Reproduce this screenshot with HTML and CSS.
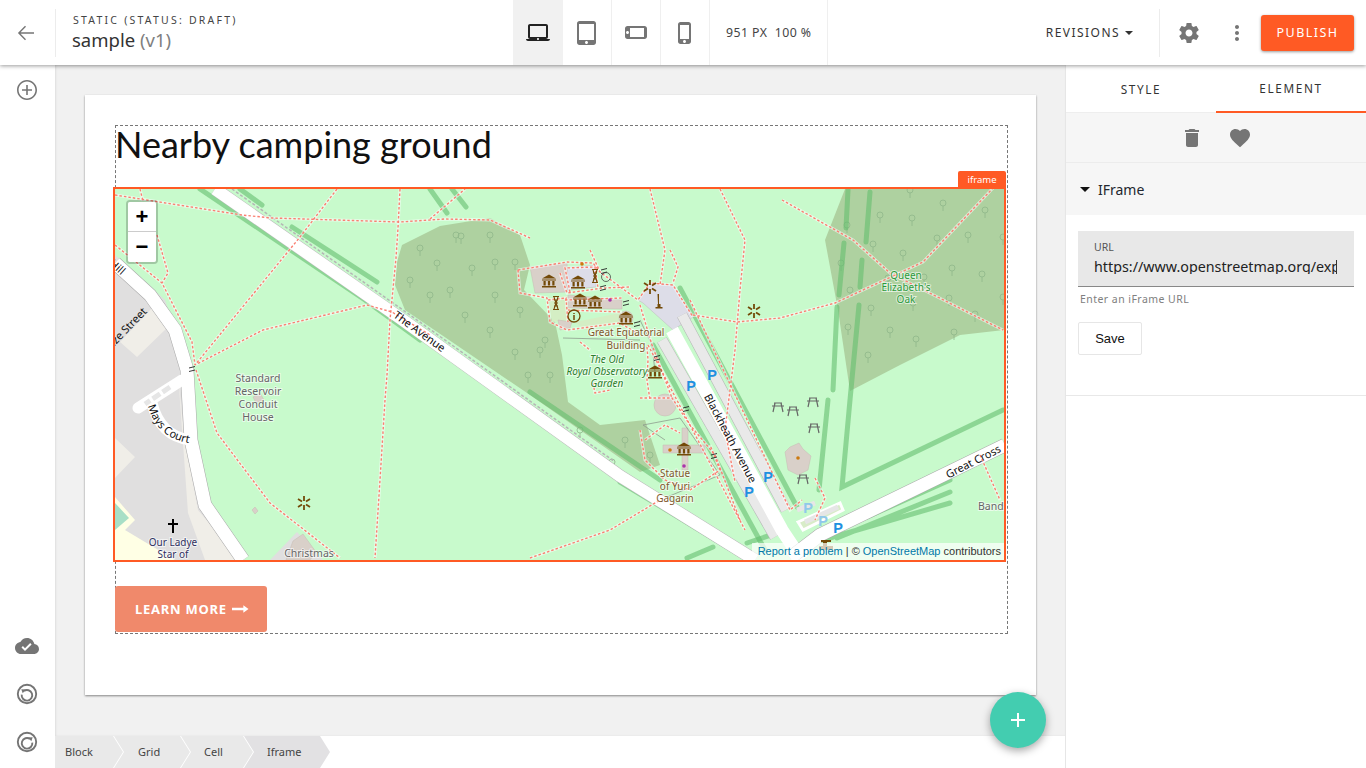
FILE: index.html
```html
<!DOCTYPE html>
<html lang="en">
<head>
<meta charset="utf-8">
<title>sample (v1)</title>
<link rel="stylesheet" href="styles.css">
</head>
<body>
<header class="topbar">
  <div class="left-group">
    <button class="back" aria-label="Back"><svg class="ic" viewBox="0 0 24 24"><path d="M20 11.300H6.600l5.400-5.600-1-1L3.900 12l7.100 7.300 1-1-5.400-5.600H20z"/></svg></button>
    <div class="title-block">
      <div class="overline">STATIC (STATUS: DRAFT)</div>
      <div class="title">sample <span class="ver">(v1)</span></div>
    </div>
  </div>
  <div class="device active"><svg class="ic dark" viewBox="0 0 24 24"><path d="M20 18c1.100 0 1.990-.9 1.990-2L22 5c0-1.100-.9-2-2-2H4c-1.100 0-2 .9-2 2v11c0 1.100.9 2 2 2H0c0 1.100.9 2 2 2h20c1.100 0 2-.9 2-2h-4zM4 5h16v11H4V5zm8 14c-.55 0-1-.45-1-1s.45-1 1-1 1 .45 1 1-.45 1-1 1z"/></svg></div>
  <div class="device"><svg class="ic" viewBox="0 0 24 24"><path d="M18.500 0h-14C3.120 0 2 1.120 2 2.500v19C2 22.880 3.120 24 4.500 24h14c1.380 0 2.500-1.120 2.500-2.500v-19C21 1.120 19.880 0 18.500 0zm-7 23c-.83 0-1.500-.67-1.500-1.500s.67-1.500 1.500-1.500 1.500.67 1.500 1.500-.67 1.500-1.500 1.500zm7.500-4H4V3h15v16z"/></svg></div>
  <div class="device"><svg class="ic" viewBox="0 0 24 24"><path transform="rotate(90 12 12)" d="M15.500 1h-8C6.120 1 5 2.120 5 3.500v17C5 21.880 6.120 23 7.500 23h8c1.380 0 2.500-1.120 2.500-2.500v-17C18 2.120 16.880 1 15.500 1zm-4 21c-.83 0-1.500-.67-1.500-1.500s.67-1.500 1.500-1.500 1.500.67 1.500 1.500-.67 1.500-1.500 1.500zm4.500-4H7V4h9v14z"/></svg></div>
  <div class="device"><svg class="ic" viewBox="0 0 24 24"><path d="M15.500 1h-8C6.120 1 5 2.120 5 3.500v17C5 21.880 6.120 23 7.500 23h8c1.380 0 2.500-1.120 2.500-2.500v-17C18 2.120 16.880 1 15.500 1zm-4 21c-.83 0-1.500-.67-1.500-1.500s.67-1.500 1.500-1.500 1.500.67 1.500 1.500-.67 1.500-1.500 1.500zm4.500-4H7V4h9v14z"/></svg></div>
  <div class="stats">951 PX&nbsp;&nbsp;100 %</div>
  <div class="spacer"></div>
  <div class="revisions">REVISIONS<span class="caret"></span></div>
  <div class="vsep"></div>
  <svg class="ic gear" viewBox="0 0 24 24"><path d="M19.430 12.980c.04-.32.07-.64.07-.98s-.03-.66-.07-.98l2.110-1.650c.19-.15.24-.42.12-.64l-2-3.460c-.12-.22-.39-.3-.61-.22l-2.490 1c-.52-.4-1.080-.73-1.690-.98l-.38-2.650C14.460 2.180 14.250 2 14 2h-4c-.25 0-.46.18-.49.42l-.38 2.650c-.61.25-1.170.59-1.690.98l-2.490-1c-.23-.09-.49 0-.61.22l-2 3.460c-.13.22-.07.49.12.64l2.110 1.650c-.04.32-.07.65-.07.98s.03.66.07.98l-2.110 1.650c-.19.15-.24.42-.12.64l2 3.460c.12.22.39.3.61.22l2.490-1c.52.4 1.080.73 1.690.98l.38 2.650c.03.24.24.42.49.42h4c.25 0 .46-.18.49-.42l.38-2.650c.61-.25 1.170-.59 1.690-.98l2.490 1c.23.09.49 0 .61-.22l2-3.460c.12-.22.07-.49-.12-.64l-2.110-1.650zM12 15.500c-1.930 0-3.500-1.570-3.500-3.500s1.570-3.500 3.500-3.500 3.500 1.570 3.500 3.500-1.570 3.500-3.500 3.500z"/></svg>
  <svg class="ic dots" viewBox="0 0 24 24"><path d="M12 8c1.100 0 2-.9 2-2s-.9-2-2-2-2 .9-2 2 .9 2 2 2zm0 2c-1.100 0-2 .9-2 2s.9 2 2 2 2-.9 2-2-.9-2-2-2zm0 6c-1.100 0-2 .9-2 2s.9 2 2 2 2-.9 2-2-.9-2-2-2z"/></svg>
  <button class="publish">PUBLISH</button>
</header>

<div class="workspace">
  <nav class="rail">
    <svg class="ic" viewBox="0 0 24 24"><path d="M12.800 7h-1.600v4.200H7v1.600h4.200V17h1.600v-4.200H17v-1.600h-4.200zM12 2C6.480 2 2 6.480 2 12s4.480 10 10 10 10-4.480 10-10S17.520 2 12 2zm0 18.400c-4.630 0-8.400-3.770-8.400-8.400S7.370 3.600 12 3.600s8.400 3.770 8.400 8.400-3.770 8.400-8.400 8.400z"/></svg>
    <div class="rail-bottom">
      <svg class="ic" viewBox="0 0 24 24"><path d="M19.350 10.040C18.670 6.590 15.640 4 12 4 9.110 4 6.600 5.640 5.350 8.040 2.340 8.360 0 10.910 0 14c0 3.310 2.690 6 6 6h13c2.760 0 5-2.240 5-5 0-2.640-2.050-4.780-4.650-4.960zM10 17l-3.500-3.500 1.410-1.410L10 14.170 15.180 9l1.410 1.410L10 17z"/></svg>
      <svg class="ic" viewBox="0 0 24 24"><circle class="ring" cx="12" cy="12" r="9.200"/><path class="ring" d="M9 8.900a5.300 5.300 0 1 1-2.300 3.700"/><path d="M6.300 7.300 10.900 7.500 7.700 11.300z"/></svg>
      <svg class="ic" viewBox="0 0 24 24"><circle class="ring" cx="12" cy="12" r="9.200"/><path class="ring" d="M15 8.900a5.300 5.300 0 1 0 2.300 3.700"/><path d="M17.700 7.300 13.100 7.500 16.300 11.300z"/></svg>
    </div>
  </nav>

  <main class="stage">
    <div class="canvas">
      <section class="card">
        <div class="dashed">
          <h1 class="headline">Nearby camping ground</h1>
          <div class="map-box">
            <span class="tag">iframe</span>
            <svg class="map" viewBox="115 189 889 371" xmlns="http://www.w3.org/2000/svg">
              <defs>
                <g id="t"><circle cx="0" cy="0" r="3"/><path d="M0 3v5"/></g>
                <g id="mus"><path d="M0-6.500 7-2.500H-7zM-7-1.500h14v1H-7zM-5.500 0h2.200v4.500h-2.200zM-1.100 0h2.200v4.500h-2.200zM3.300 0h2.200v4.500H3.300zM-7 5h14v1.500H-7z"/></g>
                <g id="pic"><path d="M-6-3H6M-4-6H4M-3-6-5 3M3-6 5 3"/></g>
                <g id="vp"><path d="M0-7v5M0 7V2M-6-4l4 2.500M6-4 2-1.500M-6 4l4-2.500M6 4 2 1.500"/></g>
                <g id="ped"><path d="M-3-2 3-3.500M-3 1.500 3 0"/></g>
                <g id="hg"><path d="M-3-6.500h6M-3 6.500h6M-2-6 2 6M2-6-2 6M-2-3H2M-2 3H2M-2 0H2"/></g>
                <path id="mcp" d="M147 402Q156 442 198 444"/>
                <g id="ways">
                  <path d="M115 195 242 215 272 218 400 222 445 219 490 220 530 238"/>
                  <path d="M140 189 143 201M157 235 168 273 162 283M115 245 162 283 192 342 195 365"/>
                  <path d="M337 189 300 237 195 365 263 330 367 305 392 312 430 335"/>
                  <path d="M196 370 217 433 270 503 340 558"/>
                  <path d="M400 189 398 228 396 258 390 320 387 375 385 400 380 480 375 558"/>
                  <path d="M430 219 465 189"/>
                  <path d="M650 189 665 250 660 285M720 189 745 240 740 290 735 350 725 430 735 482"/>
                  <path d="M782 200 853 240 890 273 1003 330"/>
                  <path d="M693 315 737 322 780 318 835 303 923 262 993 188"/>
                  <path d="M530 558 610 530 660 500"/>
                  <path d="M518 270 520 293 547 298 550 322 567 330 620 323 637 333"/>
                  <path d="M518 270 567 262 593 263 600 272 638 300 650 283 673 285 693 317"/>
                  <path d="M560 273 567 293 603 288 630 287M590 250 600 272M670 250 678 267 673 283"/>
                  <path d="M548 300 566 298 568 322M570 292 565 268 595 267 598 288"/>
                  <path d="M565 300 622 298M568 310 622 312"/>
                  <path d="M647 347 648 360 647 380 650 400"/>
                  <path d="M593 383 595 393 610 390M580 342 590 350M640 398 672 398 690 425 715 455 740 520"/>
                  <path d="M640 430 645 460 665 480 690 490 720 470 710 445M645 440 665 425 680 433"/>
                  <path d="M640 305 652 345 672 398"/>
                  <path d="M648 345 745 530M690 300 790 510 802 500"/>
                  <path d="M815 478 825 498 815 520M980 455 1000 500"/>
                </g>
              </defs>

              <rect class="bg" x="115" y="189" width="889" height="371"/>

              <!-- residential west side -->
              <path class="resi" d="M115 255 165 300 188 370 192 440 205 505 245 560H115z"/>
              <path class="beige" d="M152 308 167 328 137 357 120 342zM115 438 135 457 115 478zM178 373 184 437 198 510 240 560H205L188 513z"/>
              <path class="yellow" d="M115 497 135 520 125 530 175 560H115z"/>
              <path class="teal" d="M115 503 129 518 115 530z"/>
              <path class="resi" d="M270 560 297 532 323 560z"/>
              <path class="build" d="M293 541 303 534 316 552 310 560H286z"/>
              <path class="build" d="M252 510 255 507 258 511 255 514z"/>
              <path class="build" d="M253 397 260 393 264 400 256 403z"/>
              <path class="road-case" d="M115 263 150 295 175 330 187 370 191 440 205 505 243 560"/>
              <path class="road" d="M115 263 150 295 175 330 187 370 191 440 205 505 243 560"/>
              <path class="minor" d="M182 380 138 408M152 403Q160 436 190 440"/>
              <path class="service" d="M170 387 145 404"/>

              <!-- woodland -->
              <path class="wood" d="M397 262 402 245 440 226 490 218 520 235 530 265 524 290 555 322 562 355 568 402 600 425 645 420 660 465 640 472 530 395 405 310 395 285z"/>
              <path class="wood" d="M825 240 845 189H1004V330L960 335 900 365 850 391 838 310z"/>

              <g class="trees">
                <use href="#t" x="910" y="190"/><use href="#t" x="943" y="203"/><use href="#t" x="880" y="215"/><use href="#t" x="912" y="218"/><use href="#t" x="985" y="210"/><use href="#t" x="847" y="225"/><use href="#t" x="937" y="238"/><use href="#t" x="968" y="235"/><use href="#t" x="1003" y="237"/><use href="#t" x="873" y="244"/><use href="#t" x="903" y="253"/><use href="#t" x="841" y="263"/><use href="#t" x="952" y="268"/><use href="#t" x="982" y="274"/><use href="#t" x="924" y="277"/><use href="#t" x="888" y="278"/><use href="#t" x="850" y="290"/><use href="#t" x="1003" y="297"/><use href="#t" x="949" y="298"/><use href="#t" x="913" y="303"/><use href="#t" x="871" y="308"/><use href="#t" x="975" y="314"/><use href="#t" x="848" y="327"/><use href="#t" x="890" y="330"/><use href="#t" x="954" y="332"/><use href="#t" x="916" y="339"/><use href="#t" x="868" y="355"/>
                <use href="#t" x="456" y="235"/><use href="#t" x="461" y="236"/><use href="#t" x="490" y="235"/><use href="#t" x="420" y="248"/><use href="#t" x="437" y="263"/><use href="#t" x="472" y="268"/><use href="#t" x="495" y="262"/><use href="#t" x="515" y="262"/><use href="#t" x="410" y="280"/><use href="#t" x="430" y="295"/><use href="#t" x="465" y="315"/><use href="#t" x="495" y="295"/><use href="#t" x="520" y="310"/><use href="#t" x="450" y="290"/><use href="#t" x="490" y="330"/><use href="#t" x="515" y="352"/><use href="#t" x="540" y="350"/><use href="#t" x="550" y="375"/><use href="#t" x="528" y="375"/><use href="#t" x="545" y="340"/><use href="#t" x="580" y="430"/><use href="#t" x="625" y="440"/><use href="#t" x="612" y="462"/><use href="#t" x="650" y="455"/>
              </g>

              <!-- tree rows -->
              <path class="row" d="M200 189 365 300 420 340M530 392 660 480M240 189 262 205M292 227 377 282M430 189 447 213M452 189 466 207"/>
              <path class="row" d="M848 190 846 228M870 192 866 242M844 243 839 295M862 260 860 287M837 307 833 390M859 305 850 400M828 400 819 490M850 400 842 487 1003 410"/>
              <path class="row" d="M867 517 950 480M837 538 950 492M823 540 950 503"/>
              <path class="row" d="M620 482 683 520 745 558M747 543 777 533M687 558 713 547"/>
              <path class="row" d="M653 345 765 550M680 288 797 507"/>

              <!-- plazas and buildings -->
              <path class="plaza" d="M563 268 597 265 596 287 565 290zM638 300 650 283 673 285 693 317 673 330 643 303z"/>
              <path class="lawn" d="M548 298 568 296 570 320 552 322zM575 322 625 312 625 322 585 330z"/>
              <path class="build" d="M530 267 567 263 568 292 535 293zM568 295 622 300 622 309 568 308zM558 320 572 322 570 328 560 330z"/>
              <circle class="build" cx="626" cy="318" r="7"/>
              <circle class="build" cx="665" cy="405" r="11"/>
              <path class="build" d="M663 445H682V428H688V445H705V453H688V470H682V453H663z" stroke-linejoin="round"/>
              <path class="build" d="M785 452 790 447 799 443 803 449 811 456 808 470 798 475 788 470z"/>
              <path class="outline" d="M643 425 680 418 720 475 660 500 653 492M665 440 643 425M563 338 640 340M640 320 652 345 655 372"/>

              <!-- Blackheath Avenue + car parks -->
              <path class="lot-case" d="M662 340 775 537"/>
              <path class="lot-case" d="M682 315 786 510"/>
              <path class="lot2" d="M662 340 775 537"/>
              <path class="lot2" d="M682 315 786 510"/>
              <path class="road" d="M672 330 782 530 802 560"/>
              <path class="road-case" d="M790 558 820 535 1005 445"/>
              <path class="road" d="M790 558 820 535 1005 445"/>
              <path class="lotbox" d="M798 522 840 503 843 510 803 530z"/>
              <path class="lotin" d="M805 522 838 507M797 510 815 503"/>

              <!-- The Avenue -->
              <path class="road-case av" d="M215 189 400 318 620 476 755 560"/>
              <path class="road av" d="M215 189 400 318 620 476 755 560"/>
              <path class="footway" d="M232 189 410 315 615 462"/>

              <use href="#ways" class="halo"/>
              <use href="#ways" class="dash"/>

              <!-- POI -->
              <g class="brown">
                <use href="#mus" x="549" y="281"/><use href="#mus" x="578" y="282"/><use href="#mus" x="580" y="300"/><use href="#mus" x="595" y="302"/><use href="#mus" x="626" y="318"/><use href="#mus" x="655" y="372"/><use href="#mus" x="684" y="449"/>
                <path d="M657.500 294h1.500v10h1.500v3h2v1.500h-7V307h2v-3h.500z"/>
              </g>
              <g class="hour"><use href="#hg" x="556" y="303"/><use href="#hg" x="595" y="276"/></g>
              <path class="cap" d="M574 313v1M574 315v5"/>
              <circle class="info" cx="574" cy="316" r="6"/>
              <g class="star">
                <use href="#vp" x="650" y="287"/><use href="#vp" x="754" y="311"/><use href="#vp" x="304" y="503"/>
              </g>
              <g class="stile">
                <use href="#ped" x="604" y="272"/><use href="#ped" x="603" y="289"/><use href="#ped" x="626" y="304"/><use href="#ped" x="637" y="325"/><use href="#ped" x="657" y="359"/><use href="#ped" x="686" y="410"/><use href="#ped" x="714" y="457"/><use href="#ped" x="192" y="370"/>
              </g>
              <circle class="ringm" cx="606" cy="277" r="4.500"/>
              <g class="picnic">
                <use href="#pic" x="778" y="409"/><use href="#pic" x="793" y="413"/><use href="#pic" x="813" y="404"/><use href="#pic" x="814" y="430"/><use href="#pic" x="803" y="481"/>
              </g>
              <circle class="orange" cx="670" cy="450" r="1.800"/><circle class="orange" cx="798" cy="458" r="1.800"/><circle class="orange" cx="582" cy="264" r="1.800"/>
              <circle class="purple" cx="684" cy="466" r="1.800"/><circle class="purple" cx="610" cy="300" r="1.800"/>
              <path class="cross" d="M173 519v14M168 524h10"/>
              <path class="brown" d="M821 540h10v2h-4v4h6v4h-14v-4h4v-4h-2z"/>

              <text class="park-p" x="691" y="391">P</text><text class="park-p" x="712" y="380">P</text><text class="park-p" x="768" y="482">P</text><text class="park-p" x="749" y="497">P</text><text class="park-p" x="838" y="533">P</text>
              <text class="park-p faint" x="808" y="513">P</text><text class="park-p faint" x="823" y="526">P</text>

              <text class="lbl poi" x="626" y="336">Great Equatorial</text>
              <text class="lbl poi" x="626" y="349">Building</text>
              <text class="lbl gar" x="607" y="363">The Old</text>
              <text class="lbl gar" x="607" y="375">Royal Observatory</text>
              <text class="lbl gar" x="607" y="387">Garden</text>
              <text class="lbl poi" x="675" y="477">Statue</text>
              <text class="lbl poi" x="675" y="490">of Yuri</text>
              <text class="lbl poi" x="675" y="502">Gagarin</text>
              <text class="lbl grey" x="258" y="382">Standard</text>
              <text class="lbl grey" x="258" y="395">Reservoir</text>
              <text class="lbl grey" x="258" y="408">Conduit</text>
              <text class="lbl grey" x="258" y="421">House</text>
              <text class="lbl oak" x="906" y="279">Queen</text>
              <text class="lbl oak" x="906" y="291">Elizabeth's</text>
              <text class="lbl oak" x="906" y="303">Oak</text>
              <text class="lbl navy" x="173" y="546">Our Ladye</text>
              <text class="lbl navy" x="173" y="558">Star of</text>
              <text class="lbl grey" x="309" y="557">Christmas</text>
              <text class="lbl grey start" x="978" y="510">Bandstand</text>
              <text class="rd" transform="translate(420 331) rotate(36)">The Avenue</text>
              <text class="rd" transform="translate(731 438) rotate(62)">Blackheath Avenue</text>
              <text class="rd" transform="translate(973 461) rotate(-27)">Great Cross</text>
              <text class="rd" transform="translate(123 331) rotate(-46)">Maze Street</text>
              <text class="rd end" transform="translate(124 272) rotate(42)">Maze Hill</text>
              <text class="rdp"><textPath href="#mcp" startOffset="4">Mays Court</textPath></text>
            </svg>
            <div class="zoombox"><button class="zb top">+</button><button class="zb">&#8722;</button></div>
            <div class="attrib"><a class="osm">Report a problem</a> | &copy; <a class="osm">OpenStreetMap</a> contributors</div>
          </div>
          <a class="cta">LEARN MORE <svg class="cta-arrow" viewBox="0 0 18 10"><path d="M0 3.700h12V1l5.500 4-5.500 4V6.300H0z"/></svg></a>
        </div>
      </section>
    </div>
    <div class="crumb-bar">
      <span class="crumb c1">Block</span><span class="crumb c2">Grid</span><span class="crumb c3">Cell</span><span class="crumb c4">Iframe</span>
    </div>
    <button class="fab" aria-label="Add"><svg viewBox="0 0 16 16"><path d="M7 1h2v6h6v2H9v6H7V9H1V7h6z"/></svg></button>
  </main>

  <aside class="panel">
    <div class="tabs"><div class="tab">STYLE</div><div class="tab on">ELEMENT</div></div>
    <div class="tools">
      <svg class="ic" viewBox="0 0 24 24"><path d="M6 19c0 1.100.9 2 2 2h8c1.100 0 2-.9 2-2V7H6v12zM19 4h-3.500l-1-1h-5l-1 1H5v2h14V4z"/></svg>
      <svg class="ic" viewBox="0 0 24 24"><path d="M12 21.350l-1.450-1.320C5.400 15.360 2 12.280 2 8.500 2 5.420 4.420 3 7.500 3c1.740 0 3.410.81 4.500 2.090C13.090 3.810 14.760 3 16.500 3 19.580 3 22 5.420 22 8.500c0 3.780-3.400 6.860-8.550 11.540L12 21.350z"/></svg>
    </div>
    <div class="acc-head"><span class="acc-caret"></span>IFrame</div>
    <div class="acc-body">
      <div class="field">
        <div class="field-label">URL</div>
        <div class="field-value"><span class="field-text">https://www.openstreetmap.org/export/embed.html</span></div>
      </div>
      <div class="helper">Enter an iFrame URL</div>
      <button class="save">Save</button>
    </div>
  </aside>
</div>
</body>
</html>
```
FILE: styles.css
```css
* { box-sizing: border-box; }
html, body { margin: 0; height: 100%; }
body {
  font-family: "Noto Sans", "Open Sans", sans-serif;
  color: #333;
  overflow: hidden;
  background: #fff;
  display: flex;
  flex-direction: column;
}
button { font: inherit; border: 0; background: none; padding: 0; }
.ic { width: 24px; height: 24px; fill: #757575; display: block; flex: none; }
.ic.dark { fill: #222; }
.ring { fill: none; stroke: #757575; stroke-width: 1.9; }

/* top bar */
.topbar {
  height: 65px; flex: none; display: flex; align-items: stretch;
  background: #fff; position: relative; z-index: 5;
  box-shadow: 0 1px 4px rgba(0,0,0,.4);
}
.left-group { width: 513px; display: flex; align-items: center; }
.back { width: 56px; height: 48px; border-right: 1px solid #ececec; display: flex; align-items: center; justify-content: center; padding-right: 4px; }
.title-block { margin-left: 16px; }
.overline { font-size: 10.5px; letter-spacing: 2.22px; line-height: 14px; color: #444; padding-left: 1px; }
.title { font-size: 18.5px; line-height: 25px; color: #333; }
.ver { color: #808080; }
.device { width: 49px; display: flex; align-items: center; justify-content: center; border-right: 1px solid #efefef; }
.device.active { width: 50px; background: #f1f1f1; border-right: 0; }
.stats { width: 118px; border-right: 1px solid #efefef; display: flex; align-items: center; padding-left: 16px; font-size: 12.3px; color: #444; white-space: pre; letter-spacing: .45px; }
.spacer { flex: 1; }
.revisions { display: flex; align-items: center; font-size: 12px; letter-spacing: 1.45px; color: #333; margin-right: 26px; }
.caret { width: 0; height: 0; border: 4px solid transparent; border-top-color: #333; border-bottom: 0; margin-left: 5px; }
.vsep { width: 1px; height: 48px; background: #ececec; align-self: center; }
.gear { align-self: center; margin-left: 17px; }
.dots { align-self: center; margin-left: 24px; }
.publish {
  width: 93px; height: 36px; align-self: center; margin-left: 12px; margin-right: 12px;
  background: #ff5a24; color: #fff; border-radius: 3px; font-size: 12.5px; letter-spacing: 1.45px;
  box-shadow: 0 1px 3px rgba(0,0,0,.4);
}

/* workspace */
.workspace { flex: 1; display: flex; min-height: 0; }
.rail { width: 55px; flex: none; background: #fff; display: flex; flex-direction: column; align-items: center; padding-top: 13px; padding-right: 1px; position: relative; z-index: 2; }
.rail-bottom { margin-top: auto; display: flex; flex-direction: column; align-items: center; gap: 24px; padding-bottom: 14px; }

.stage { flex: 1; min-width: 0; display: flex; flex-direction: column; position: relative; }
.canvas { flex: 1; background: #f1f1f1; padding: 30px; min-height: 0; box-shadow: inset 1px 0 2px rgba(0,0,0,.08); }
.card { width: 951px; height: 600px; background: #fff; padding: 30px; box-shadow: 0 1px 2px rgba(0,0,0,.45); }
.dashed { width: 893px; height: 509px; border: 1px dashed #777; }
.headline { margin: 0 0 0 -1px; height: 61px; font: 400 36px/37px Lato, sans-serif; color: #111; }
.map-box { position: relative; width: 893px; height: 375px; margin-left: -3px; border: 2px solid #ff5a24; }
.map { display: block; width: 889px; height: 371px; }
.tag { position: absolute; right: -2px; top: -18px; width: 48px; height: 16px; background: #ff5a24; color: #fff; font-size: 9.5px; line-height: 17px; text-align: center; border-radius: 2px 2px 0 0; }
.zoombox { position: absolute; left: 11px; top: 11px; width: 32px; border: 2px solid rgba(0,0,0,.2); border-radius: 4px; background-clip: padding-box; }
.zb { display: block; width: 28px; height: 30px; background: #fff; color: #000; font: 700 22px/30px "Liberation Sans", sans-serif; text-align: center; border-radius: 0 0 2px 2px; }
.zb.top { border-bottom: 1px solid #ccc; border-radius: 2px 2px 0 0; }
.attrib { position: absolute; right: 0; bottom: 0; height: 17px; padding: 0 3px 0 6px; background: rgba(255,255,255,.7); font: 11px/17px "Liberation Sans", sans-serif; color: #333; white-space: nowrap; }
.osm { color: #0078a8; }
.cta { display: flex; align-items: center; gap: 5px; width: 152px; height: 46px; margin: 24px 0 0 -1px; padding-left: 20px; background: #f0896b; color: #fff; border-radius: 3px; font-size: 13px; font-weight: 700; letter-spacing: .75px; }
.cta-arrow { width: 17px; height: 10px; fill: #fff; }

/* map */
.bg { fill: #c8facc; }
.resi { fill: #e0dfdf; }
.beige { fill: #f0eee8; }
.yellow { fill: #ffffe5; }
.teal { fill: #a8dfc6; }
.build { fill: #d9d0c9; stroke: #c6bbb3; stroke-width: .5; }
.wood { fill: #aed1a0; }
.plaza { fill: #dddde8; stroke: #bbb; stroke-width: .5; }
.lawn { fill: #d4eec4; }
.trees { fill: none; stroke: #8fb88a; stroke-width: .8; }
.row { fill: none; stroke: rgba(100,190,110,.6); stroke-width: 5; stroke-linecap: round; }
.road { fill: none; stroke: #fff; stroke-width: 13; }
.road-case { fill: none; stroke: #a9a9a9; stroke-width: 14; }
.road.av { stroke-width: 12; }
.road-case.av { stroke: #bbb; stroke-width: 13; }
.minor { fill: none; stroke: #fff; stroke-width: 11; stroke-linecap: round; }
.service { fill: none; stroke: #e6e6e6; stroke-width: 5; stroke-dasharray: 9 3; }
.lot-case { fill: none; stroke: #b4b4b4; stroke-width: 11; }
.lot2 { fill: none; stroke: #e9e9e9; stroke-width: 10; }
.lotbox { fill: #d8ecc8; stroke: #fff; stroke-width: 3; }
.lotin { fill: none; stroke: #e6e6e6; stroke-width: 5; }
.footway { fill: none; stroke: #b5b5b5; stroke-width: 1.5; stroke-dasharray: 3 2; }
.outline { fill: none; stroke: #8e9c8e; stroke-width: .8; }
.halo { fill: none; stroke: rgba(255,255,255,.55); stroke-width: 3; }
.dash { fill: none; stroke: #fa8072; stroke-width: 1.4; stroke-dasharray: 2.5 2; }
.brown { fill: #734a08; stroke: none; }
.hour { fill: none; stroke: #734a08; stroke-width: 1.1; }
.cap { fill: none; stroke: #734a08; stroke-width: 1.5; }
.info { fill: none; stroke: #734a08; stroke-width: 1.3; }
.star { fill: none; stroke: #734a08; stroke-width: 1.8; }
.stile { fill: none; stroke: #222; stroke-width: .9; }
.ringm { fill: none; stroke: #444; stroke-width: .8; }
.picnic { fill: none; stroke: #666; stroke-width: 1.2; }
.orange { fill: #cc7a10; }
.purple { fill: #aa33aa; }
.cross { fill: none; stroke: #000; stroke-width: 2; }
.park-p { font: 700 14.5px "Liberation Sans", sans-serif; fill: #2090e0; text-anchor: middle; }
.park-p.faint { fill: #90c8ea; }
.lbl { font-family: "Noto Sans", sans-serif; font-size: 10px; text-anchor: middle; paint-order: stroke; stroke: rgba(255,255,255,.6); stroke-width: 2px; }
.poi { fill: #80582a; }
.gar { fill: #2c7f2c; font-style: italic; }
.grey { fill: #666; font-size: 10.5px; }
.oak { fill: #2c9a3c; font-size: 10px; }
.navy { fill: #303060; font-size: 10px; }
.start { text-anchor: start; }
.rd { font-family: "Noto Sans", sans-serif; font-size: 11px; fill: #111; text-anchor: middle; dominant-baseline: central; }
.rd.end { text-anchor: end; }
.rdp { font-family: "Noto Sans", sans-serif; font-size: 11px; fill: #111; }

/* breadcrumbs */
.crumb-bar { height: 32px; flex: none; background: #fff; display: flex; font-size: 11px; color: #444; }
.crumb { height: 32px; display: flex; align-items: center; background: #e9e9e9; padding-left: 24px; padding-bottom: 1px; margin-right: -9px;
  clip-path: polygon(0 0, calc(100% - 10px) 0, 100% 50%, calc(100% - 10px) 100%, 0 100%, 10px 50%); }
.c1 { width: 68px; padding-left: 10px; clip-path: polygon(0 0, calc(100% - 10px) 0, 100% 50%, calc(100% - 10px) 100%, 0 100%); }
.c2 { width: 76px; }
.c3 { width: 72px; padding-left: 23px; }
.c4 { width: 86px; padding-left: 23px; background: #e2e1e3; }

.fab { position: absolute; left: 935px; top: 627px; width: 56px; height: 56px; border-radius: 50%; background: #43cdb0; box-shadow: 0 3px 8px rgba(0,0,0,.35); display: flex; align-items: center; justify-content: center; }
.fab svg { width: 16px; height: 16px; fill: #fff; }

/* panel */
.panel { width: 301px; flex: none; background: #fff; border-left: 1px solid #e6e6e6; position: relative; z-index: 2; }
.tabs { display: flex; height: 48px; border-bottom: 1px solid #eee; }
.tab { flex: 1; display: flex; align-items: center; justify-content: center; font-size: 11.8px; letter-spacing: 1.6px; color: #333; }
.tab.on { border-bottom: 2px solid #ff5a24; margin-bottom: -1px; }
.tools { height: 50px; background: #f6f6f6; border-bottom: 1px solid #ececec; display: flex; align-items: center; justify-content: center; gap: 24px; padding-right: 1px; }
.acc-head { height: 52px; background: #f6f6f6; display: flex; align-items: center; padding-left: 14px; font-size: 14px; color: #23272e; }
.acc-caret { width: 0; height: 0; border: 5px solid transparent; border-top-color: #111; border-bottom: 0; margin-right: 8px; }
.acc-body { height: 181px; padding: 16px 12px 0; border-bottom: 1px solid #e8e8e8; }
.field { height: 56px; background: #e8e8e8; border-bottom: 1px solid #888; padding: 9px 15px 0 16px; }
.field-label { font-size: 10.5px; line-height: 14px; color: #555; }
.field-value { width: 243px; overflow: hidden; border-right: 1px solid #333; height: 14px; margin-top: 6px; display: flex; align-items: center; }
.field-text { font-size: 14.3px; line-height: 20px; color: #222; white-space: nowrap; }
.helper { font-size: 10.5px; line-height: 14px; letter-spacing: .45px; color: #808080; margin: 5px 0 0 2px; }
.save { display: block; width: 64px; height: 33px; margin-top: 16px; background: #fff; border: 1px solid #e6e6e6; border-radius: 2px; font: 13px "Liberation Sans", sans-serif; color: #111; }
```
